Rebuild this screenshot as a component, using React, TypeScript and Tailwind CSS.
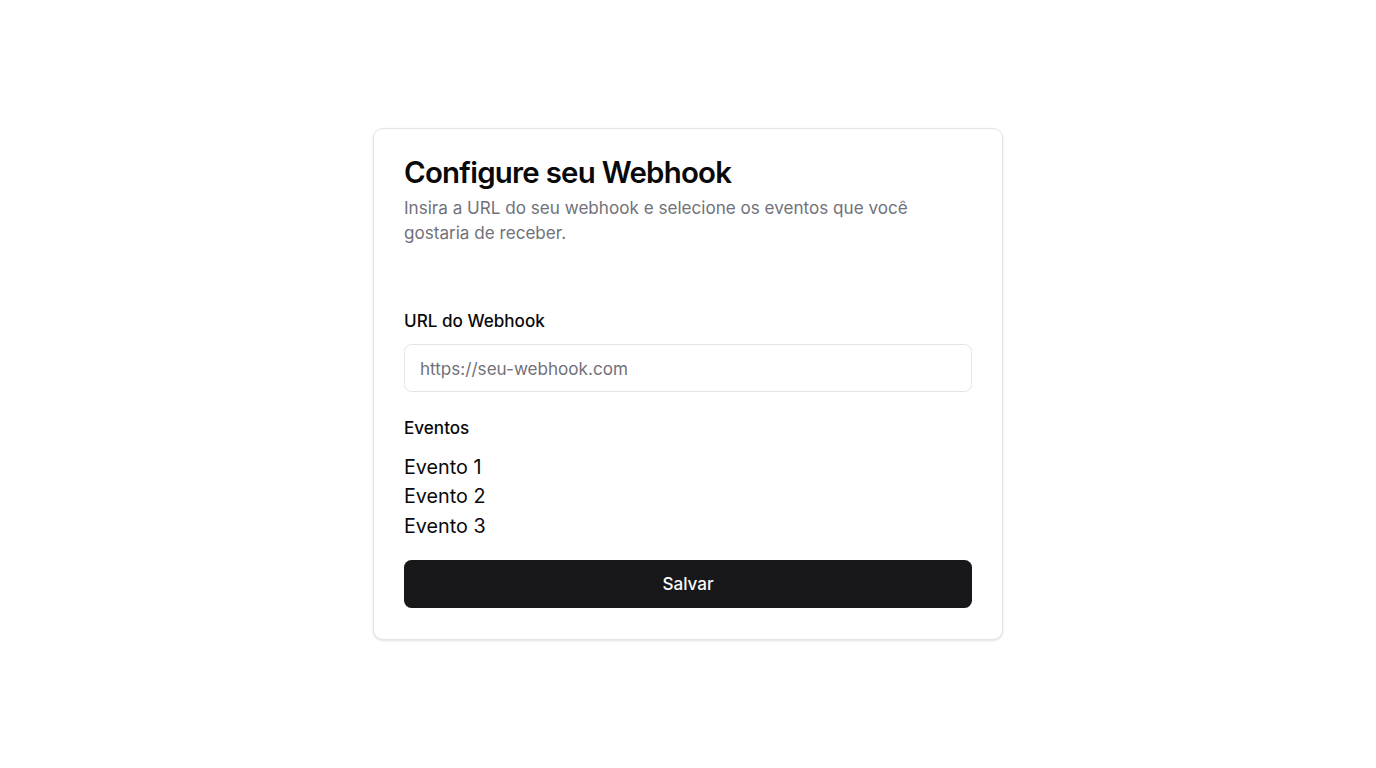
import React from 'react';

const events = ['Evento 1', 'Evento 2', 'Evento 3'];

const App: React.FC = () => {
  return (
    <div
      className="flex min-h-screen items-center justify-center bg-white"
      style={{ fontFamily: 'Inter, "Noto Sans", sans-serif' }}
    >
      <div className="w-[630px] rounded-[10px] border border-[#e4e4e7] bg-white p-[30px] pb-[31px] shadow-sm">
        <h1 className="-mt-[1px] text-[29.4px] font-semibold leading-none tracking-tight text-[#09090b]">
          Configure seu Webhook
        </h1>
        <p className="mt-[7.5px] text-[17.1px] leading-[25px] text-[#71717a]">
          Insira a URL do seu webhook e selecione os eventos que você gostaria de receber.
        </p>

        <form onSubmit={(e) => e.preventDefault()}>
          <label
            htmlFor="url"
            className="mt-[66.75px] block text-[17.1px] font-medium leading-none text-[#09090b]"
          >
            URL do Webhook
          </label>
          <input
            id="url"
            type="text"
            placeholder="https://seu-webhook.com"
            className="mt-[15px] h-[48px] w-full rounded-[7.5px] border border-[#e4e4e7] bg-white px-[15px] text-[17.1px] text-[#09090b] outline-none placeholder:text-[#71717a]"
          />

          <label className="mt-[27.25px] block text-[17.1px] font-medium leading-none text-[#09090b]">
            Eventos
          </label>
          <ul className="mt-[16px]">
            {events.map((ev) => (
              <li key={ev} className="text-[19.75px] leading-[29.5px] text-[#09090b]">
                {ev}
              </li>
            ))}
          </ul>

          <button
            type="submit"
            className="mt-[18.5px] h-[48px] w-full rounded-[7.5px] bg-[#18181b] text-[17.1px] font-medium text-[#fafafa]"
          >
            Salvar
          </button>
        </form>
      </div>
    </div>
  );
};

export default App;
